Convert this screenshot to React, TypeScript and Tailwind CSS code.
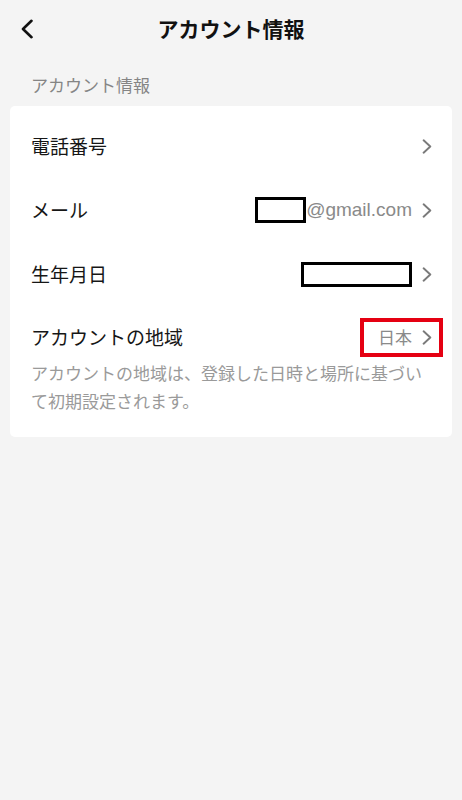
import React from 'react'

const jp = { fontFamily: '"Noto Sans CJK JP", "Noto Sans", sans-serif' }

function Chevron({ dir = 'right', className = '' }: { dir?: 'left' | 'right'; className?: string }) {
  return dir === 'left' ? (
    <svg viewBox="0 0 14 20" className={className} fill="none" stroke="currentColor" strokeWidth="2.6" strokeLinecap="round" strokeLinejoin="round">
      <path d="M11.5 1.8 3 10l8.5 8.2" />
    </svg>
  ) : (
    <svg viewBox="0 0 10 15" className={className} fill="none" stroke="currentColor" strokeWidth="1.9" strokeLinecap="round" strokeLinejoin="round">
      <path d="M1.6 1.3 8.3 7.5 1.6 13.7" />
    </svg>
  )
}

function Row({ label, children }: { label: string; children?: React.ReactNode }) {
  return (
    <div className="flex h-16 items-center justify-between pl-[21px] pr-[20px]">
      <span className="text-[19px] text-[#161616]">{label}</span>
      <div className="flex items-center">
        {children}
        <Chevron className="ml-[10px] h-[15px] w-[10px] text-[#7a7a7a]" />
      </div>
    </div>
  )
}

export default function App() {
  return (
    <div className="min-h-[800px] bg-[#f4f4f4]" style={jp}>
      <header className="grid h-[58px] grid-cols-[60px_1fr_60px] items-center">
        <div className="flex justify-start pl-[20px]">
          <Chevron dir="left" className="h-[20px] w-[14px] text-[#111]" />
        </div>
        <h1 className="text-center text-[21px] font-bold text-[#111]">アカウント情報</h1>
        <div />
      </header>

      <div className="px-[31px] pb-[9px] pt-[15px] text-[17px] leading-[24px] text-[#858585]">アカウント情報</div>

      <div className="mx-[10px] rounded-[5px] bg-white pt-2">
        <Row label="電話番号" />
        <Row label="メール">
          <span className="h-[26px] w-[51px] border-[3px] border-black bg-white" />
          <span className="text-[19px] text-[#8a8a8a]" style={{ fontFamily: '"Liberation Sans", Arial, sans-serif' }}>
            @gmail.com
          </span>
        </Row>
        <Row label="生年月日">
          <span className="h-[25px] w-[111px] border-[3px] border-black bg-white" />
        </Row>

        <div className="pb-[22px] pl-[21px] pr-[20px] pt-4">
          <div className="flex h-[30px] items-center justify-between">
            <span className="text-[19px] text-[#161616]">アカウントの地域</span>
            <div className="relative flex items-center">
              <span className="text-[17px] text-[#8a8a8a]">日本</span>
              <Chevron className="ml-[10px] h-[15px] w-[10px] text-[#7a7a7a]" />
              <span className="pointer-events-none absolute -bottom-[7px] -left-[18px] -right-[11px] -top-[6px] border-[4px] border-[#e50012]" />
            </div>
          </div>
          <p className="mt-[7px] text-[17px] leading-[28px] text-[#9a9a9a]">
            アカウントの地域は、登録した日時と場所に基づいて初期設定されます。
          </p>
        </div>
      </div>
    </div>
  )
}
